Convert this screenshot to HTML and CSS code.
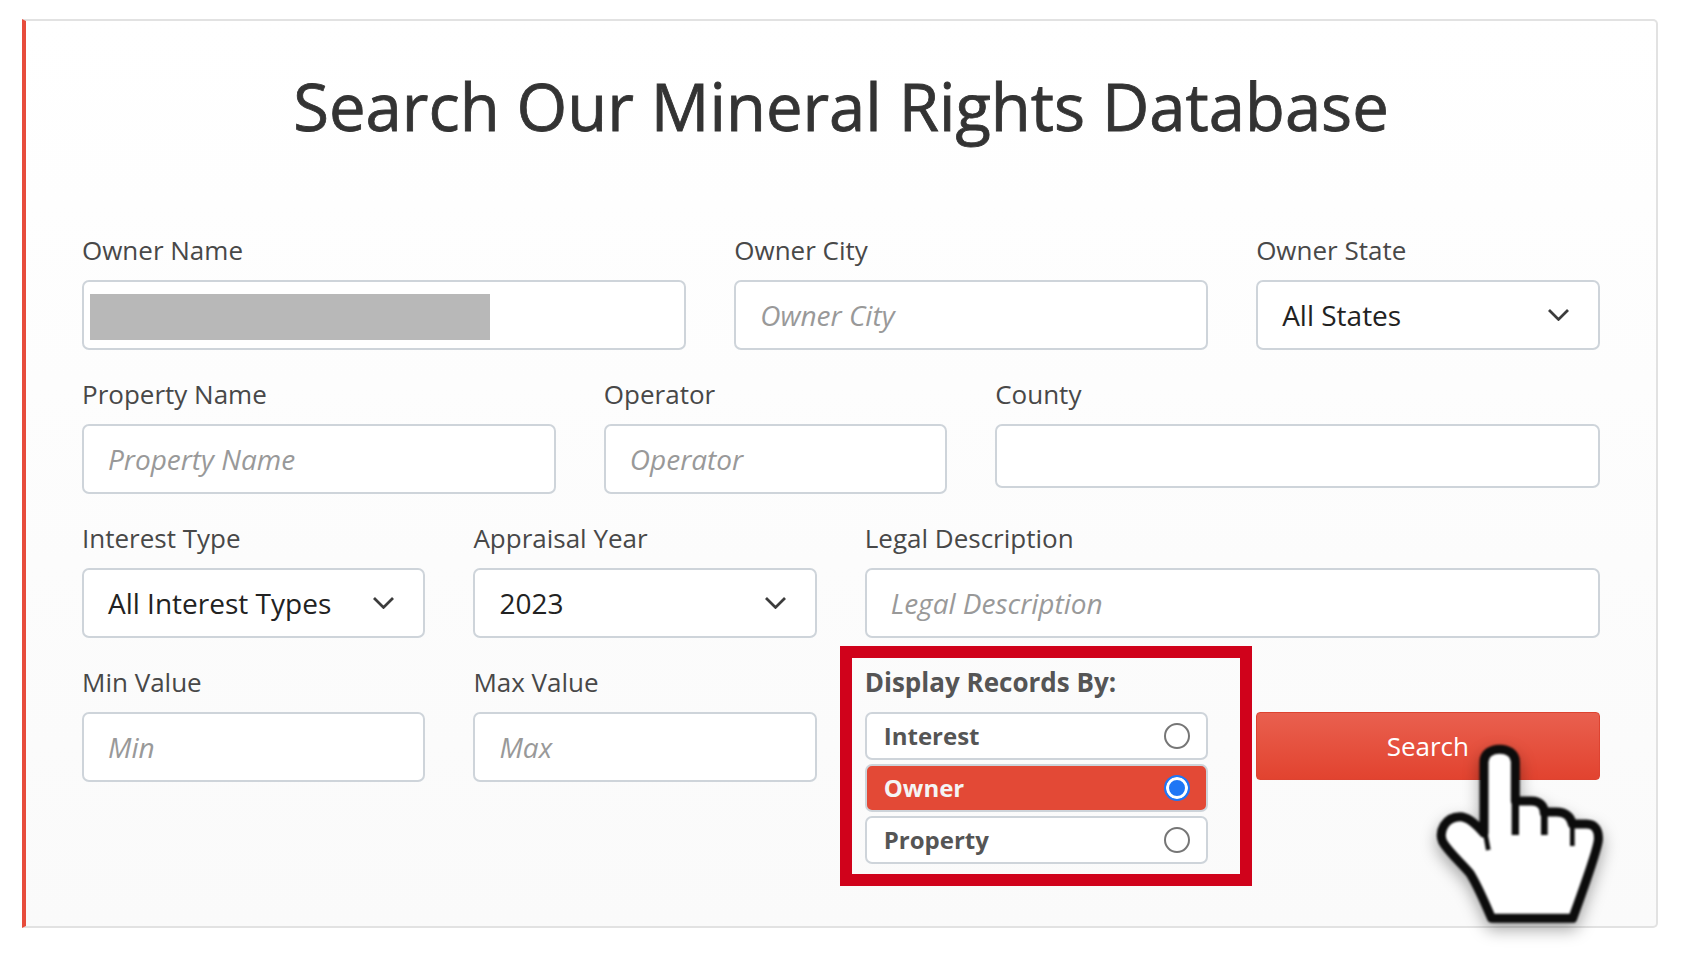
FILE: index.html
```html
<!DOCTYPE html>
<html lang="en">
<head>
<meta charset="utf-8">
<title>Search Our Mineral Rights Database</title>
<link rel="stylesheet" href="styles.css">
</head>
<body>
<main class="card">
  <h1 class="title">Search Our Mineral Rights Database</h1>
  <form class="form">
    <div class="field span-5">
      <label class="label">Owner Name</label>
      <div class="redact-wrap">
        <input class="control" type="text">
        <div class="redact"></div>
      </div>
    </div>
    <div class="field span-4">
      <label class="label">Owner City</label>
      <input class="control" type="text" placeholder="Owner City">
    </div>
    <div class="field span-3">
      <label class="label">Owner State</label>
      <div class="control select"><span>All States</span>
        <svg class="chevron" viewBox="0 0 21 12"><path d="M1 1 10.5 10.4 20 1"/></svg>
      </div>
    </div>

    <div class="field span-4">
      <label class="label">Property Name</label>
      <input class="control" type="text" placeholder="Property Name">
    </div>
    <div class="field span-3">
      <label class="label">Operator</label>
      <input class="control" type="text" placeholder="Operator">
    </div>
    <div class="field span-5">
      <label class="label">County</label>
      <input class="control short" type="text">
    </div>

    <div class="field span-3">
      <label class="label">Interest Type</label>
      <div class="control select"><span>All Interest Types</span>
        <svg class="chevron" viewBox="0 0 21 12"><path d="M1 1 10.5 10.4 20 1"/></svg>
      </div>
    </div>
    <div class="field span-3">
      <label class="label">Appraisal Year</label>
      <div class="control select"><span>2023</span>
        <svg class="chevron" viewBox="0 0 21 12"><path d="M1 1 10.5 10.4 20 1"/></svg>
      </div>
    </div>
    <div class="field span-6">
      <label class="label">Legal Description</label>
      <input class="control" type="text" placeholder="Legal Description">
    </div>

    <div class="field span-3">
      <label class="label">Min Value</label>
      <input class="control" type="text" placeholder="Min">
    </div>
    <div class="field span-3">
      <label class="label">Max Value</label>
      <input class="control" type="text" placeholder="Max">
    </div>
    <div class="field span-3 display">
      <div class="label label-bold">Display Records By:</div>
      <div class="options">
        <label class="option"><span class="option-text">Interest</span><input class="radio" type="radio" name="by"></label>
        <label class="option option-on"><span class="option-text">Owner</span><input class="radio" type="radio" name="by" checked></label>
        <label class="option"><span class="option-text">Property</span><input class="radio" type="radio" name="by"></label>
      </div>
      <div class="highlight"></div>
    </div>
    <div class="field span-3 action">
      <button class="search" type="button">Search</button>
    </div>
  </form>
  <svg class="hand" viewBox="0 0 876 798" aria-hidden="true">
    <path class="hand-body" d="M252 400V185C252 135 346 135 346 185V303H395C420 303 433 318 433 340V336H470C495 336 512 348 517 372H560C585 372 597 390 595 420C592 450 560 540 518 655H275C255 610 235 560 210 520C185 490 145 455 128 425C115 395 135 350 180 350C205 350 235 380 252 400Z"/>
    <path class="hand-line line-a" d="M346 303V405"/>
    <path class="hand-line line-b" d="M433 336V405"/>
    <path class="hand-line line-c" d="M517 372V438M256 400 265 450"/>
  </svg>
</main>
</body>
</html>
```

FILE: styles.css
```css
* { box-sizing: border-box; }

html, body { margin: 0; background: #fff; }

body {
  font-family: "Open Sans", "Liberation Sans", sans-serif;
  color: #444;
  width: 1692px;
  height: 966px;
  overflow: hidden;
  padding: 19px 0 0 22px;
}

.card {
  position: relative;
  width: 1636px;
  height: 909px;
  padding: 0 56.5px 0 56px;
  border: 2px solid #e2e2e2;
  border-left: 4px solid #e74c3c;
  border-radius: 0 5px 5px 0;
  background: linear-gradient(#fff, #fafafa);
}

.title {
  margin: 0 0 0 -56px;
  width: 1630px;
  padding: 45px 0 0;
  height: 213px;
  font-size: 65.2px;
  line-height: 80px;
  font-weight: 500;
  -webkit-text-stroke: 0.8px #333;
  color: #333;
  text-align: center;
}

.form {
  display: grid;
  grid-template-columns: repeat(12, 1fr);
  column-gap: 48px;
  row-gap: 28px;
  align-items: start;
}

.span-3 { grid-column: span 3; }
.span-4 { grid-column: span 4; }
.span-5 { grid-column: span 5; }
.span-6 { grid-column: span 6; }

.field { min-width: 0; }

.label {
  display: block;
  height: 34px;
  margin-bottom: 12px;
  font-size: 26px;
  line-height: 32px;
  color: #484848;
}

.label-bold { font-weight: 700; color: #555; }

.control {
  display: block;
  width: 100%;
  height: 70px;
  padding: 0 24px;
  border: 2px solid #ced4da;
  border-radius: 7px;
  background: #fff;
  font-family: inherit;
  font-size: 28px;
  color: #222;
  outline: none;
}

.control.short { height: 64px; }

.control::placeholder {
  font-style: italic;
  color: #999;
  opacity: 1;
}

.select {
  display: flex;
  align-items: center;
  justify-content: space-between;
  padding: 0 29px 0 24px;
}

.chevron {
  width: 21px;
  height: 12px;
  flex: none;
  margin-top: -1px;
}

.chevron path {
  fill: none;
  stroke: #3c3c3c;
  stroke-width: 2.8;
}

.redact-wrap { position: relative; }

.redact {
  position: absolute;
  left: 8px;
  top: 14px;
  width: 400px;
  height: 46px;
  background: #b8b8b8;
}

.display { position: relative; }

.options {
  display: flex;
  flex-direction: column;
  gap: 4px;
}

.option {
  display: flex;
  align-items: center;
  justify-content: space-between;
  height: 48px;
  padding: 0 16px 0 17px;
  border: 2px solid #ced4da;
  border-radius: 7px;
  background: #fff;
  font-size: 24px;
  font-weight: 700;
  color: #555;
}

.option-text { margin-top: -2px; }

.option-on {
  background: #e34936;
  color: #f4f4f4;
}

.radio {
  appearance: none;
  width: 26px;
  height: 26px;
  margin: 0;
  flex: none;
  border: 2px solid #767676;
  border-radius: 50%;
  background: #fff;
}

.radio:checked {
  border: 2px solid #1f76f5;
  background: #1f76f5;
  box-shadow: inset 0 0 0 3px #fff;
}

.highlight {
  position: absolute;
  left: -25px;
  top: -20px;
  width: 412px;
  height: 240px;
  border: 12px solid #d0021b;
  pointer-events: none;
}

.action { padding-top: 46px; }

.search {
  display: block;
  width: 100%;
  height: 68px;
  border: 1px solid #dd4331;
  border-radius: 4px;
  background: linear-gradient(#e9604f, #e2432f);
  font-family: inherit;
  font-size: 26px;
  color: #fff;
}

.hand {
  position: absolute;
  left: 1374px;
  top: 679px;
  width: 292px;
  height: 266px;
  overflow: visible;
  filter: blur(1px) drop-shadow(0 7px 8px rgba(0, 0, 0, 0.35));
}

.hand-body {
  fill: #fff;
  stroke: #0c0c0c;
  stroke-width: 27;
  stroke-linejoin: round;
}

.hand-line {
  fill: none;
  stroke: #0c0c0c;
}

.line-a { stroke-width: 22; }
.line-b { stroke-width: 20; }
.line-c { stroke-width: 14; }
```
